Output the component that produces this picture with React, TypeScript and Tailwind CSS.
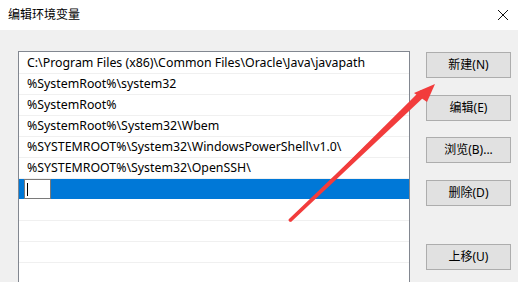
const paths = [
  'C:\\Program Files (x86)\\Common Files\\Oracle\\Java\\javapath',
  '%SystemRoot%\\system32',
  '%SystemRoot%',
  '%SystemRoot%\\System32\\Wbem',
  '%SYSTEMROOT%\\System32\\WindowsPowerShell\\v1.0\\',
  '%SYSTEMROOT%\\System32\\OpenSSH\\'
]

const font = { fontFamily: '"Noto Sans", "Noto Sans CJK SC", sans-serif' }

const Btn = ({ label, className }: { label: string; className: string }) => (
  <button
    className={`flex h-[26px] w-[85px] items-center justify-center border border-[#adadad] bg-[#e1e1e1] text-[12px] text-black ${className}`}
  >
    {label}
  </button>
)

const App = () => {
  return (
    <div
      className="relative h-[282px] w-[518px] overflow-hidden bg-[#f0f0f0]"
      style={font}
    >
      <div className="flex h-[30px] items-center justify-between bg-white pl-[8px] pr-[8px]">
        <span className="text-[12px] text-black">编辑环境变量</span>
        <svg width="12" height="12" viewBox="0 0 12 12" className="mr-[1px]">
          <path d="M1 1 L11 11 M11 1 L1 11" stroke="#111" strokeWidth="1" />
        </svg>
      </div>

      <div className="flex pl-[18px] pt-[21px]">
        <div className="h-[240px] w-[392px] border border-[#828790] bg-white pt-[1px]">
          {paths.map((p) => (
            <div
              key={p}
              className="flex h-[21px] items-center border-b border-[#f0f0f0] pl-[8px] text-[12.35px] leading-none whitespace-nowrap text-black"
            >
              {p}
            </div>
          ))}
          <div className="flex h-[21px] items-stretch border-b border-white bg-[#0078d7] pl-[5px]">
            <div className="flex w-[27px] items-center border border-[#7a7a7a] bg-white pl-[2px]">
              <div className="h-[13px] w-[1px] bg-black" />
            </div>
          </div>
          {[0, 1, 2, 3].map((i) => (
            <div key={i} className="h-[21px] border-b border-[#f0f0f0]" />
          ))}
        </div>

        <div className="ml-[16px] flex flex-col pt-[1px]">
          <Btn label="新建(N)" className="" />
          <Btn label="编辑(E)" className="mt-[17px]" />
          <Btn label="浏览(B)..." className="mt-[16px]" />
          <Btn label="删除(D)" className="mt-[17px]" />
          <Btn label="上移(U)" className="mt-[38px]" />
        </div>
      </div>

      <svg
        className="pointer-events-none absolute left-0 top-0"
        width="518"
        height="282"
        viewBox="0 0 518 282"
      >
        <path d="M289 221 L291 222 L425 96 L421 90 Z" fill="#f23c3c" />
        <path d="M290 220 L423 93" stroke="#f23c3c" strokeWidth="3" strokeLinecap="round" />
        <path d="M435 84 L414 93 L427 102 Z" fill="#f23c3c" />
      </svg>
    </div>
  )
}

export default App
